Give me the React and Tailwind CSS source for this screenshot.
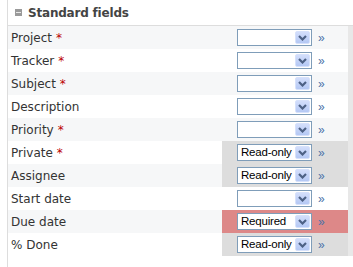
import React from "react";

const rows = [
  { label: "Project", req: true, val: "" },
  { label: "Tracker", req: true, val: "" },
  { label: "Subject", req: true, val: "" },
  { label: "Description", req: false, val: "" },
  { label: "Priority", req: true, val: "" },
  { label: "Private", req: true, val: "Read-only", cls: "readonly" },
  { label: "Assignee", req: false, val: "Read-only", cls: "readonly" },
  { label: "Start date", req: false, val: "" },
  { label: "Due date", req: false, val: "Required", cls: "required" },
  { label: "% Done", req: false, val: "Read-only", cls: "readonly" },
];

function Select({ value }) {
  return (
    <div className="relative w-[75px] h-[17px] border border-[#7f9db9] bg-white flex items-center">
      <span className="pl-[3px] text-[11.5px] leading-[15px] text-black font-['Liberation_Sans',sans-serif] tracking-[-0.2px]">
        {value}
      </span>
      <div className="absolute right-[1px] top-[1px] w-[15px] h-[13px] rounded-[2px] border border-[#d6e1fb] bg-gradient-to-b from-[#d3defb] to-[#b4c8f4] flex items-center justify-center">
        <svg width="9" height="6" viewBox="0 0 9 6">
          <polyline points="1,1 4.5,4.5 8,1" fill="none" stroke="#4d6185" strokeWidth="2.2" />
        </svg>
      </div>
    </div>
  );
}

export default function App() {
  return (
    <div className="w-[353px] h-[267px] bg-white overflow-hidden font-['DejaVu_Sans',Verdana,sans-serif]">
      <div className="ml-[7px] h-[267px] border-l border-[#dddddd]">
        <div className="h-[26px] border-b border-[#dddddd] flex items-center pl-[7px]">
          <div className="w-[7px] h-[7px] bg-[#9a9a9a] flex items-center justify-center mr-[6px]">
            <div className="w-[5px] h-[1px] bg-[#e8e8e8]" />
          </div>
          <span className="text-[12px] font-bold text-[#444444] tracking-[-0.2px]">Standard fields</span>
        </div>
        {rows.map((r, i) => (
          <div key={r.label} className={"flex h-[23px] " + (i % 2 === 0 ? "bg-[#f6f7f8]" : "bg-white")}>
            <div className="w-[214px] flex items-center pl-[3px] text-[12px] text-[#333333]">
              {r.label}
              {r.req && <span className="text-[#bb0000] ml-[4px]">*</span>}
            </div>
            <div
              className={
                "w-[126px] flex items-center pl-[15px] gap-[6px] " +
                (r.cls === "readonly" ? "bg-[#dddddd]" : r.cls === "required" ? "bg-[#dd8888]" : "")
              }
            >
              <Select value={r.val} />
              <span className="text-[12px] text-[#4a72a8] font-['Liberation_Sans',sans-serif] leading-none">»</span>
            </div>
            <div className="flex-1 bg-[#e8e8e8]" />
          </div>
        ))}
      </div>
    </div>
  );
}
